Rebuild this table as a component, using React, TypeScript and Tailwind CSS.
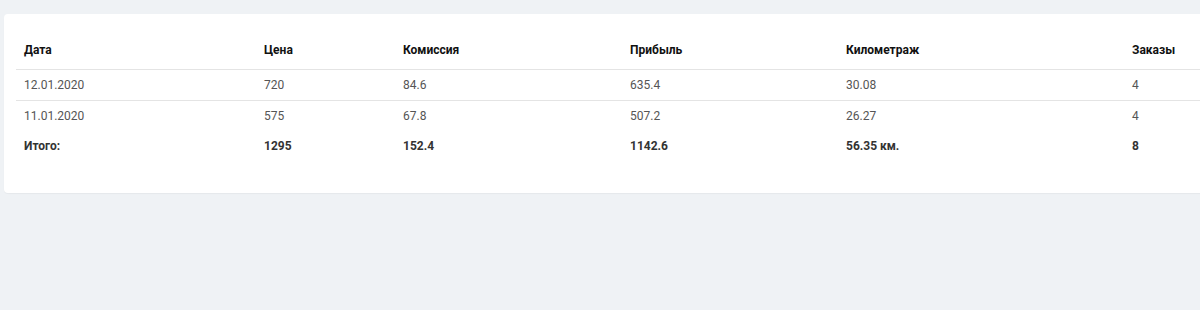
const rows = [
  { date: '12.01.2020', price: '720', fee: '84.6', profit: '635.4', km: '30.08', orders: '4' },
  { date: '11.01.2020', price: '575', fee: '67.8', profit: '507.2', km: '26.27', orders: '4' },
];

const cols = ['w-[240px]', 'w-[139px]', 'w-[227px]', 'w-[216px]', 'w-[286px]', 'w-[120px]'];

export default function App() {
  return (
    <div className="h-[310px] w-[1200px] overflow-hidden bg-[#eff2f5] pt-[14px] pl-[4px] font-['Roboto',sans-serif] text-[12px]">
      <div className="w-[1260px] rounded-[4px] bg-white px-[12px] pt-[16px] pb-[32px] shadow-[0_1px_1px_rgba(0,0,0,0.04)]">
        <table className="w-[1228px] table-fixed border-collapse text-left">
          <thead>
            <tr className="h-[39px] border-b border-[#e4e4e4]">
              {['Дата', 'Цена', 'Комиссия', 'Прибыль', 'Километраж', 'Заказы'].map((h, i) => (
                <th key={h} className={`${cols[i]} px-[8px] pt-[1px] font-bold text-[#111]`}>
                  {h}
                </th>
              ))}
            </tr>
          </thead>
          <tbody className="text-[#555]">
            {rows.map((r, i) => (
              <tr key={r.date} className={i === 0 ? 'h-[31px] border-b border-[#e4e4e4]' : 'h-[31px] pt-[1px]'}>
                <td className="px-[8px]">{r.date}</td>
                <td className="px-[8px]">{r.price}</td>
                <td className="px-[8px]">{r.fee}</td>
                <td className="px-[8px]">{r.profit}</td>
                <td className="px-[8px]">{r.km}</td>
                <td className="px-[8px]">{r.orders}</td>
              </tr>
            ))}
            <tr className="h-[30px] font-bold text-[#333]">
              <td className="px-[8px]">Итого:</td>
              <td className="px-[8px]">1295</td>
              <td className="px-[8px]">152.4</td>
              <td className="px-[8px]">1142.6</td>
              <td className="px-[8px]">56.35 км.</td>
              <td className="px-[8px]">8</td>
            </tr>
          </tbody>
        </table>
      </div>
    </div>
  );
}
